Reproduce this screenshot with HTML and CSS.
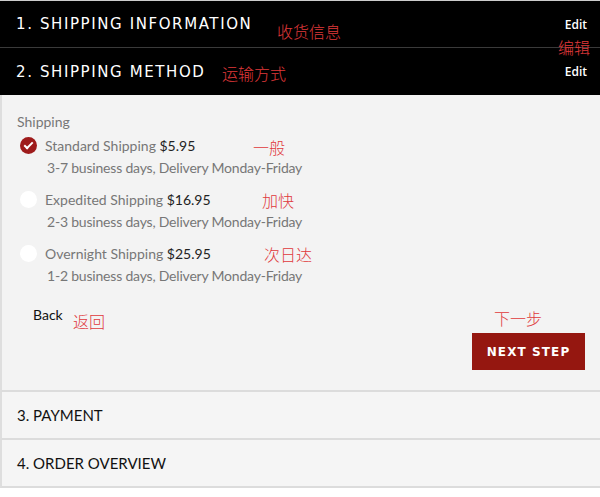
FILE: index.html
```html
<html>
<head>
    <link rel="stylesheet" href="styles.css">
</head>
<body>
  <div class="checkout">
    <div class="done-steps">
      <div class="step-head">
        <h2>1. Shipping Information</h2>
        <a href="#">Edit</a>
      </div>
      <div class="step-head">
        <h2>2. Shipping Method</h2>
        <a href="#">Edit</a>
      </div>
    </div>

    <div class="step-body">
      <div class="group-label">Shipping</div>
      <label class="option">
        <input type="radio" name="ship" checked>
        <span class="dot"></span>
        <span class="text">
          <span class="name">Standard Shipping <b>$5.95</b></span>
          <span class="desc">3-7 business days, Delivery Monday-Friday</span>
        </span>
      </label>
      <label class="option">
        <input type="radio" name="ship">
        <span class="dot"></span>
        <span class="text">
          <span class="name">Expedited Shipping <b>$16.95</b></span>
          <span class="desc">2-3 business days, Delivery Monday-Friday</span>
        </span>
      </label>
      <label class="option">
        <input type="radio" name="ship">
        <span class="dot"></span>
        <span class="text">
          <span class="name">Overnight Shipping <b>$25.95</b></span>
          <span class="desc">1-2 business days, Delivery Monday-Friday</span>
        </span>
      </label>
      <div class="actions">
        <a href="#" class="back">Back</a>
        <button type="button">Next Step</button>
      </div>
    </div>

    <div class="step-closed">3. Payment</div>
    <div class="step-closed">4. Order Overview</div>

    <!-- translator notes -->
    <span class="note n1">收货信息</span>
    <span class="note n2">编辑</span>
    <span class="note n3">运输方式</span>
    <span class="note n4">一般</span>
    <span class="note n5">加快</span>
    <span class="note n6">次日达</span>
    <span class="note n7">返回</span>
    <span class="note n8">下一步</span>
  </div>
</body>
</html>
```

FILE: styles.css
```css
html, body {
  height: 100%;
}
body {
  margin: 0;
  padding: 0;
  background: #fff;
  font-family: Lato, sans-serif;
}

.checkout {
  position: relative;
}

.done-steps {
  background: #000;
  border-top: 1px solid #ccc;
}

.step-head {
  display: flex;
  justify-content: space-between;
  align-items: center;
  height: 46px;
  padding: 0 13px 0 16px;
}
.step-head + .step-head {
  border-top: 1px solid #3a3a3a;
  height: 47px;
}

.step-head h2 {
  margin: 0;
  color: #fff;
  font-family: "DejaVu Sans", sans-serif;
  font-weight: normal;
  font-size: 15px;
  letter-spacing: 1.6px;
  text-transform: uppercase;
}

.step-head a {
  color: #fff;
  font-family: "Open Sans", sans-serif;
  font-size: 12px;
  font-weight: 600;
  text-decoration: none;
}

.step-body {
  background: #f3f3f3;
  border-left: 2px solid #dedede;
  padding: 17px 15px 20px 15px;
  border-bottom: 2px solid #dcdcdc;
}

.group-label {
  color: #777;
  font-size: 14px;
  line-height: 20px;
  margin-bottom: 3px;
}

.option {
  display: flex;
  align-items: flex-start;
  margin-bottom: 10px;
  cursor: pointer;
}
.option input {
  display: none;
}
.option .dot {
  width: 17px;
  height: 17px;
  border-radius: 50%;
  background: #fff;
  margin: 2px 8px 0 3px;
  flex-shrink: 0;
  position: relative;
}
.option input:checked + .dot {
  background: #9e1b1b;
}
.option input:checked + .dot::after {
  content: "";
  position: absolute;
  left: 6px;
  top: 3px;
  width: 3px;
  height: 7px;
  border: solid #fff;
  border-width: 0 2px 2px 0;
  transform: rotate(45deg);
}

.option .text {
  display: flex;
  flex-direction: column;
}
.option .name {
  color: #777;
  font-size: 14px;
  line-height: 22px;
}
.option .name b {
  color: #222;
  font-weight: normal;
}
.option .desc {
  color: #777;
  font-size: 14px;
  line-height: 22px;
  letter-spacing: -0.2px;
  padding-left: 2px;
}

.actions {
  display: flex;
  justify-content: space-between;
  align-items: flex-start;
}

.actions .back {
  color: #111;
  font-size: 14px;
  line-height: 20px;
  text-decoration: none;
  margin: 8px 0 0 16px;
}

.actions button {
  margin-top: 36px;
  width: 113px;
  height: 37px;
  border: none;
  background: #951710;
  color: #fff;
  font-family: "DejaVu Sans", sans-serif;
  font-weight: bold;
  font-size: 12px;
  letter-spacing: 1.1px;
  text-transform: uppercase;
}

.step-closed {
  background: #f5f5f5;
  border-left: 2px solid #dedede;
  border-bottom: 2px solid #dcdcdc;
  height: 46px;
  line-height: 46px;
  padding-left: 15px;
  color: #111;
  font-size: 15px;
  text-transform: uppercase;
}

.note {
  position: absolute;
  color: #e0393b;
  font-family: "Noto Sans CJK SC", sans-serif;
  font-weight: 300;
  font-size: 16px;
  line-height: 18px;
  white-space: nowrap;
}
.n1 { left: 277px; top: 22px; }
.n2 { left: 558px; top: 38px; }
.n3 { left: 222px; top: 64px; }
.n4 { left: 253px; top: 138px; }
.n5 { left: 262px; top: 191px; }
.n6 { left: 264px; top: 245px; }
.n7 { left: 73px; top: 312px; }
.n8 { left: 494px; top: 309px; }
```
